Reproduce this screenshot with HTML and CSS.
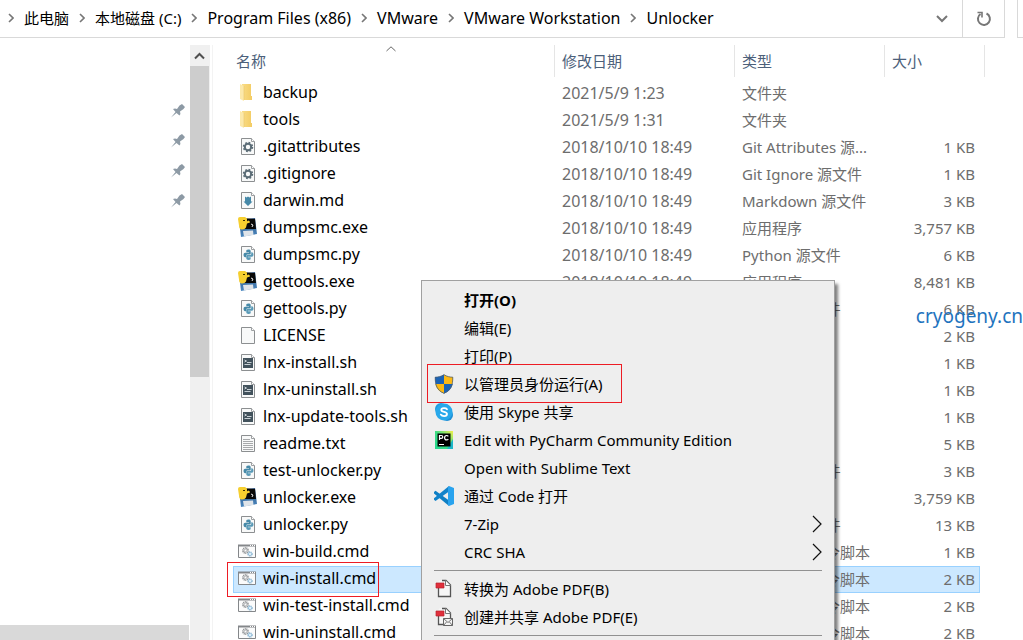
FILE: index.html
```
<!DOCTYPE html>
<html lang="zh-CN">
<head>
    <meta charset="UTF-8">
    <meta name="viewport" content="width=device-width, initial-scale=1.0">
    <title>Unlocker</title>
    <link rel="stylesheet" href="styles.css">
</head>
<body>
    <!-- icon definitions -->
    <svg class="defs" aria-hidden="true">
        <linearGradient id="gold" x1="0" x2="1" y1="0" y2="0">
            <stop offset="0" stop-color="#f9dc86"/>
            <stop offset="1" stop-color="#f3cc64"/>
        </linearGradient>
        <linearGradient id="floppy" x1="0" x2="0" y1="0" y2="1">
            <stop offset="0" stop-color="#2c5585"/>
            <stop offset="1" stop-color="#4b88c0"/>
        </linearGradient>
        <linearGradient id="charm" x1="0" x2="1" y1="1" y2="0">
            <stop offset="0" stop-color="#22d88f"/>
            <stop offset=".5" stop-color="#3fdc83"/>
            <stop offset="1" stop-color="#f5f04a"/>
        </linearGradient>
        <symbol id="folder" viewBox="0 0 20 20">
            <path d="M4 2h9v12h1v4H4z" fill="url(#gold)"/>
            <path d="M2 2l4 2v15l-4-2z" fill="#fce9ab"/>
            <path d="M6 4v14" stroke="#e9c66a" stroke-width=".6"/>
        </symbol>
        <symbol id="page" viewBox="0 0 20 20">
            <path d="M3.500 2.500h10l3 3v13h-13z" fill="#f8f9f9" stroke="#8c8f91"/>
            <path d="M13.500 2.500v3h3" fill="#fff" stroke="#9da0a2"/>
        </symbol>
        <symbol id="gear" viewBox="0 0 20 20">
            <use href="#page"/>
            <circle cx="10" cy="11" r="3.200" fill="none" stroke="#5b6c76" stroke-width="2"/>
            <circle cx="10" cy="11" r="4.500" fill="none" stroke="#5b6c76" stroke-width="1.500" stroke-dasharray="1.770 1.770"/>
        </symbol>
        <symbol id="md" viewBox="0 0 20 20">
            <use href="#page"/>
            <path d="M7 6.500l1.500 1 1.500-1 1.500 1 1.500-1v5h1.500L10 16l-4.500-4.500H7z" fill="#4689a8"/>
        </symbol>
        <symbol id="snake" viewBox="0 0 20 20">
            <path d="M10 1C6 1 6 2.500 6 4v2h5v1H4C1.500 7 1 9 1 11s1 4 3 4h2v-3c0-1.500 1-2 2.500-2H12c1.500 0 2-1 2-2V4c0-2-1.500-3-4-3z" fill="#4689a8"/>
            <path d="M10 20c4 0 4-1.500 4-3v-2H9v-1h7c2.500 0 3-2 3-4s-1-4-3-4h-1v3c0 1.500-1 2-2.500 2H8c-1.500 0-2 1-2 2v4c0 2 1.500 3 4 3z" fill="#5a9ab7"/>
        </symbol>
        <symbol id="py" viewBox="0 0 20 20">
            <use href="#page"/>
            <use href="#snake" x="5" y="5" width="11" height="11"/>
        </symbol>
        <symbol id="sh" viewBox="0 0 20 20">
            <use href="#page"/>
            <path d="M5 6h10v10H5z" fill="#42525c"/>
            <path d="M6.500 8l2 1-2 1M9 10.500h4.500M6.500 12.500h6" fill="none" stroke="#d8dfe3" stroke-width=".9"/>
        </symbol>
        <symbol id="txt" viewBox="0 0 20 20">
            <use href="#page"/>
            <path d="M5 6.500h7M5 8.500h10M5 10.500h10M5 12.500h10M5 14.500h10M5 16.500h10" stroke="#a7a9ab"/>
        </symbol>
        <symbol id="exe" viewBox="0 0 20 20">
            <path d="M1 3l16-2 2 16-16 3z" fill="url(#floppy)"/>
            <path d="M4 1l13 1 1 10H4z" fill="#080808"/>
            <path d="M0 2q0-2 2-2h5l2 1.500v3l1-1q2 0 2 2l-3 1-1 4q-1 2-4 2-3 0-3-4z" fill="#f6cf2f"/>
            <path d="M5 14l10-.5.500 4.500L6 19.500z" fill="#dfe4e9"/>
            <path d="M13 7l2 1-1 2" fill="none" stroke="#eee"/>
            <path d="M5 3.500h2" stroke="#3a3000"/>
        </symbol>
        <symbol id="cmd" viewBox="0 0 20 20">
            <path d="M.5 4.500h17v12H.5z" fill="#fbfbfb" stroke="#84878a"/>
            <path d="M0 4.500h18" stroke="#84878a" stroke-width="2"/>
            <path d="M12 4.500h1M14 4.500h1M16 4.500h1" stroke="#fff"/>
            <circle cx="7.500" cy="9.500" r="2.600" fill="none" stroke="#8b8e91" stroke-width="1.600" stroke-dasharray="1 .6"/>
            <circle cx="7.500" cy="9.500" r="1.300" fill="none" stroke="#9b9ea1" stroke-width=".7"/>
            <circle cx="12" cy="13" r="2" fill="#dceefa" stroke="#77a9ca" stroke-width="1.300" stroke-dasharray="1 .5"/>
        </symbol>
        <symbol id="pin" viewBox="0 0 16 16">
            <path d="M9.500 2.500L12 1l3 3-1.500 2-3.500 2.500q1 2.500-.5 4L6.500 10 1 14.500 5.500 9 3 6q2-1 4 0z" fill="#8d9aa5"/>
        </symbol>
        <symbol id="next" viewBox="0 0 6 10">
            <path d="M1 1l4 4-4 4" fill="none" stroke="#777" stroke-width="1.600"/>
        </symbol>
        <symbol id="sub" viewBox="0 0 10 18">
            <path d="M1 1l8 8-8 8" fill="none" stroke="#111" stroke-width="1.200"/>
        </symbol>
        <symbol id="pdf" viewBox="0 0 20 20">
            <path d="M5 1.500h7l4.500 4.500v11.500H4V5" fill="#f6f6f6"/>
            <path d="M8 1.500h4l4.500 4.500v11.500H4.500V9" fill="none" stroke="#555" stroke-width="1.300"/>
            <path d="M11.500 1.500v5h5" fill="#fff" stroke="#777"/>
            <path d="M2 4h8v5H2z" fill="#e0303c" stroke="#b8202c" stroke-width=".7"/>
        </symbol>
    </svg>

    <header class="topbar">
        <nav class="address" aria-label="路径">
            <svg class="next"><use href="#next"/></svg>
            <a href="#">此电脑</a>
            <svg class="next"><use href="#next"/></svg>
            <a href="#">本地磁盘 (C:)</a>
            <svg class="next"><use href="#next"/></svg>
            <a class="latin" href="#">Program Files (x86)</a>
            <svg class="next"><use href="#next"/></svg>
            <a class="latin" href="#">VMware</a>
            <svg class="next"><use href="#next"/></svg>
            <a class="latin" href="#">VMware Workstation</a>
            <svg class="next"><use href="#next"/></svg>
            <a class="latin" href="#">Unlocker</a>
            <button class="history" aria-label="以前的位置">
                <svg width="12" height="8" viewBox="0 0 12 8"><path d="M1 1l5 5 5-5" fill="none" stroke="#777" stroke-width="2"/></svg>
            </button>
            <button class="refresh" aria-label="刷新">
                <svg width="16" height="16" viewBox="0 0 16 16">
                    <path d="M10.500 2.500a6 6 0 1 1-6 .5" fill="none" stroke="#777" stroke-width="2"/>
                    <path d="M1.500 1.500H6v5" fill="none" stroke="#777" stroke-width="1.600"/>
                </svg>
            </button>
        </nav>
        <div class="search"></div>
    </header>

    <div class="content">
        <aside class="sidebar">
            <div class="tree">
                <svg class="pin"><use href="#pin"/></svg>
                <svg class="pin"><use href="#pin"/></svg>
                <svg class="pin"><use href="#pin"/></svg>
                <svg class="pin"><use href="#pin"/></svg>
                <div class="hscroll"></div>
            </div>
            <div class="vscroll">
                <button class="up" aria-label="向上滚动">
                    <svg width="11" height="8" viewBox="0 0 11 8"><path d="M1 6.500l4.500-4.500L10 6.500" fill="none" stroke="#505050" stroke-width="2"/></svg>
                </button>
                <div class="thumb"></div>
            </div>
        </aside>

        <main class="files">
            <table>
                <colgroup><col class="c-name"><col class="c-date"><col class="c-type"><col class="c-size"></colgroup>
                <thead>
                    <tr>
                        <th>名称<svg class="sort" width="10" height="6" viewBox="0 0 10 6"><path d="M.5 5L5 .8 9.500 5" fill="none" stroke="#666"/></svg></th>
                        <th>修改日期</th><th>类型</th><th>大小</th>
                    </tr>
                </thead>
                <tbody>
                    <tr><td><svg class="icon"><use href="#folder"/></svg>backup</td><td>2021/5/9 1:23</td><td>文件夹</td><td></td></tr>
                    <tr><td><svg class="icon"><use href="#folder"/></svg>tools</td><td>2021/5/9 1:31</td><td>文件夹</td><td></td></tr>
                    <tr><td><svg class="icon"><use href="#gear"/></svg>.gitattributes</td><td>2018/10/10 18:49</td><td>Git Attributes 源...</td><td>1 KB</td></tr>
                    <tr><td><svg class="icon"><use href="#gear"/></svg>.gitignore</td><td>2018/10/10 18:49</td><td>Git Ignore 源文件</td><td>1 KB</td></tr>
                    <tr><td><svg class="icon"><use href="#md"/></svg>darwin.md</td><td>2018/10/10 18:49</td><td>Markdown 源文件</td><td>3 KB</td></tr>
                    <tr><td><svg class="icon"><use href="#exe"/></svg>dumpsmc.exe</td><td>2018/10/10 18:49</td><td>应用程序</td><td>3,757 KB</td></tr>
                    <tr><td><svg class="icon"><use href="#py"/></svg>dumpsmc.py</td><td>2018/10/10 18:49</td><td>Python 源文件</td><td>6 KB</td></tr>
                    <tr><td><svg class="icon"><use href="#exe"/></svg>gettools.exe</td><td>2018/10/10 18:49</td><td>应用程序</td><td>8,481 KB</td></tr>
                    <tr><td><svg class="icon"><use href="#py"/></svg>gettools.py</td><td>2018/10/10 18:49</td><td>Python 源文件</td><td>6 KB</td></tr>
                    <tr><td><svg class="icon"><use href="#page"/></svg>LICENSE</td><td>2018/10/10 18:49</td><td>文件</td><td>2 KB</td></tr>
                    <tr><td><svg class="icon"><use href="#sh"/></svg>lnx-install.sh</td><td>2018/10/10 18:49</td><td>SH 文件</td><td>1 KB</td></tr>
                    <tr><td><svg class="icon"><use href="#sh"/></svg>lnx-uninstall.sh</td><td>2018/10/10 18:49</td><td>SH 文件</td><td>1 KB</td></tr>
                    <tr><td><svg class="icon"><use href="#sh"/></svg>lnx-update-tools.sh</td><td>2018/10/10 18:49</td><td>SH 文件</td><td>1 KB</td></tr>
                    <tr><td><svg class="icon"><use href="#txt"/></svg>readme.txt</td><td>2018/10/10 18:49</td><td>文本文档</td><td>5 KB</td></tr>
                    <tr><td><svg class="icon"><use href="#py"/></svg>test-unlocker.py</td><td>2018/10/10 18:49</td><td>Python 源文件</td><td>3 KB</td></tr>
                    <tr><td><svg class="icon"><use href="#exe"/></svg>unlocker.exe</td><td>2018/10/10 18:49</td><td>应用程序</td><td>3,759 KB</td></tr>
                    <tr><td><svg class="icon"><use href="#py"/></svg>unlocker.py</td><td>2018/10/10 18:49</td><td>Python 源文件</td><td>13 KB</td></tr>
                    <tr><td><svg class="icon"><use href="#cmd"/></svg>win-build.cmd</td><td>2018/10/10 18:49</td><td>Windows 命令脚本</td><td>1 KB</td></tr>
                    <tr class="selected"><td><svg class="icon"><use href="#cmd"/></svg>win-install.cmd<span class="mark mark-file"></span></td><td>2018/10/10 18:49</td><td>Windows 命令脚本</td><td>2 KB</td></tr>
                    <tr><td><svg class="icon"><use href="#cmd"/></svg>win-test-install.cmd</td><td>2018/10/10 18:49</td><td>Windows 命令脚本</td><td>2 KB</td></tr>
                    <tr><td><svg class="icon"><use href="#cmd"/></svg>win-uninstall.cmd</td><td>2018/10/10 18:49</td><td>Windows 命令脚本</td><td>2 KB</td></tr>
                </tbody>
            </table>
        </main>
    </div>

    <!-- right click menu -->
    <div class="menu">
        <button class="item default"><span class="icon"></span>打开(O)</button>
        <button class="item"><span class="icon"></span>编辑(E)</button>
        <button class="item"><span class="icon"></span>打印(P)</button>
        <button class="item">
            <svg class="icon" viewBox="0 0 20 20">
                <path d="M10 .5C7 2.500 4 3 1 3c0 8 2 13.500 9 16.500z" fill="#1b63b5"/>
                <path d="M10 .5c3 2 6 2.500 9 2.500 0 8-2 13.500-9 16.500z" fill="#fdb913"/>
                <path d="M1.200 10H10v9.500Q3 17 1.200 10z" fill="#fdb913"/>
                <path d="M18.800 10H10v9.500Q17 17 18.800 10z" fill="#1b63b5"/>
                <path d="M10 .7C7 2.600 4 3.200 1.200 3.200c0 8 1.800 13.200 8.800 16.100 7-2.900 8.800-8.100 8.800-16.100C16 3.200 13 2.600 10 .7z" fill="none" stroke="#4b5f73" stroke-width=".8"/>
            </svg>以管理员身份运行(A)<span class="mark mark-run"></span>
        </button>
        <button class="item">
            <svg class="icon" viewBox="0 0 20 20">
                <circle cx="7" cy="7" r="6" fill="#1e9be0"/><circle cx="13" cy="13" r="6" fill="#1e8ed6"/>
                <circle cx="10" cy="10" r="8.500" fill="#28a8ea"/>
                <path d="M13 7.200C12 5.800 7.300 5.500 7.300 8c0 2.500 5.700 1.300 5.700 4 0 2.800-5 2.500-6.200.6" fill="none" stroke="#fff" stroke-width="1.800" stroke-linecap="round"/>
            </svg>使用 Skype 共享
        </button>
        <button class="item">
            <svg class="icon" viewBox="0 0 20 20">
                <path d="M1 1h18v18H1z" fill="url(#charm)"/>
                <path d="M13 19l6-10v10z" fill="#1cb7c8"/>
                <path d="M3.500 3.500h13v13h-13z" fill="#000"/>
                <path d="M5.500 10V5.500h1.800q1.500 0 1.500 1.400T7.300 8.300H5.500M14.300 6.300q-.6-.8-1.700-.8-2 0-2 2.200t2 2.200q1.100 0 1.700-.8M5 14.500h5" fill="none" stroke="#fff" stroke-width="1.200"/>
            </svg>Edit with PyCharm Community Edition
        </button>
        <button class="item"><span class="icon"></span>Open with Sublime Text</button>
        <button class="item">
            <svg class="icon" viewBox="0 0 20 20">
                <path d="M0 6l1.500-1.200L15 14.500V20L0 7.500z" fill="#0f7fc4"/>
                <path d="M0 13.800l1.500 1.200L15 5.500V0L0 12.300z" fill="#1283ca"/>
                <path d="M15 0l5 2v16l-5 2-1-1.500V1.500z" fill="#29a3ee"/>
            </svg>通过 Code 打开
        </button>
        <button class="item"><span class="icon"></span>7-Zip<svg class="sub"><use href="#sub"/></svg></button>
        <button class="item"><span class="icon"></span>CRC SHA<svg class="sub"><use href="#sub"/></svg></button>
        <hr>
        <button class="item"><svg class="icon"><use href="#pdf"/></svg>转换为 Adobe PDF(B)</button>
        <button class="item">
            <svg class="icon" viewBox="0 0 20 20">
                <use href="#pdf"/>
                <path d="M9.500 11.500h9v7h-9z" fill="#f4f4f4" stroke="#666"/>
                <path d="M9.500 11.500l4.500 4 4.500-4M9.500 18.500l3-3.500M18.500 18.500l-3-3.500" fill="none" stroke="#666" stroke-width=".9"/>
            </svg>创建并共享 Adobe PDF(E)
        </button>
        <hr>
    </div>

    <div class="watermark">cryogeny.cn</div>
</body>
</html>
```

FILE: styles.css
```
* {
    box-sizing: border-box;
}
body {
    margin: 0;
    height: 100vh;
    overflow: hidden;
    position: relative;
    display: flex;
    flex-direction: column;
    background: #fff;
    color: #000;
    font: 15px/20px "Noto Sans", "Noto Sans CJK SC", sans-serif;
}
button {
    padding: 0;
    border: 0;
    background: none;
    color: inherit;
    font: inherit;
}
svg {
    flex: none;
}
.defs {
    position: absolute;
    width: 0;
    height: 0;
}

/* address bar */
.topbar {
    flex: none;
    display: flex;
    gap: 12px;
    height: 38px;
}
.address {
    flex: 1;
    display: flex;
    align-items: center;
    border: 1px solid #d9d9d9;
    border-width: 0 1px 1px 0;
    white-space: nowrap;
}
.address a {
    padding-bottom: 2px;
    color: inherit;
    text-decoration: none;
}
.address .latin {
    font-size: 16px;
}
.next {
    width: 6px;
    height: 10px;
    margin: 0 10px 2px;
}
.next:first-child {
    margin-left: 8px;
}
.history {
    margin-left: auto;
    width: 40px;
    height: 100%;
}
.refresh {
    width: 42px;
    height: 100%;
    border-left: 1px solid #d9d9d9;
}
.history svg, .refresh svg {
    display: block;
    margin: auto;
}
.search {
    width: 6px;
    border: 1px solid #d9d9d9;
    border-width: 0 0 1px 1px;
}

.content {
    flex: 1;
    min-height: 0;
    display: flex;
    padding-top: 7px;
}

/* left pane */
.sidebar {
    flex: none;
    display: flex;
    width: 213px;
    border-right: 1px solid #f3f3f3;
}
.tree {
    width: 190px;
    display: flex;
    flex-direction: column;
    align-items: flex-end;
    gap: 14px;
    padding-top: 58px;
}
.pin {
    width: 16px;
    height: 16px;
    margin-right: 4px;
}
.hscroll {
    align-self: stretch;
    height: 15px;
    margin: auto 1px 0 0;
    background: #d9d9d9;
}
.vscroll {
    width: 20px;
    background: #f0f0f0;
}
.up {
    display: block;
    width: 19px;
    height: 21px;
}
.up svg {
    display: block;
    margin: auto;
}
.thumb {
    width: 19px;
    height: 311px;
    background: #cdcdcd;
}

/* file list */
.files {
    flex: 1;
    min-width: 0;
    overflow: hidden;
    padding-left: 20px;
}
table {
    width: 752px;
    table-layout: fixed;
    border-collapse: separate;
    border-spacing: 0;
    white-space: nowrap;
}
.c-name { width: 322px; }
.c-date { width: 180px; }
.c-type { width: 150px; }
.c-size { width: 100px; }
th {
    position: relative;
    height: 32px;
    padding: 0 7px;
    border-right: 1px solid #e5e5e5;
    color: #4c607a;
    font-weight: normal;
    text-align: left;
}
th:first-child {
    padding-left: 3px;
}
.sort {
    position: absolute;
    top: 1px;
    left: 153px;
}
tbody::before {
    content: "";
    display: table-row;
    height: 3px;
}
td {
    height: 27px;
    padding: 0 7px 2px;
    color: #6d6d6d;
}
td:nth-child(-n+2) {
    font-size: 16px;
}
td:first-child {
    position: relative;
    padding: 0 0 0 5px;
    color: #000;
}
td:last-child {
    padding-right: 5px;
    border-right: 5px solid transparent;
    background-clip: padding-box;
    text-align: right;
}
.icon {
    width: 20px;
    height: 20px;
}
td .icon {
    margin: 0 5px 4px 0;
    vertical-align: middle;
}
.selected td {
    background-color: #cce8ff;
    box-shadow: inset 0 1px #99d1ff, inset 0 -1px #99d1ff;
}
.selected td:first-child {
    box-shadow: inset 0 1px #99d1ff, inset 0 -1px #99d1ff, inset 1px 0 #99d1ff;
}
.selected td:last-child {
    box-shadow: inset 0 1px #99d1ff, inset 0 -1px #99d1ff, inset -1px 0 #99d1ff;
}

/* context menu */
.menu {
    position: absolute;
    top: 280px;
    left: 421px;
    width: 414px;
    padding: 5px 12px;
    background: #eee;
    border: 1px solid #a0a0a0;
    box-shadow: 3px 4px 3px rgba(0, 0, 0, 0.5);
}
.item {
    position: relative;
    display: flex;
    align-items: center;
    gap: 10px;
    width: 100%;
    height: 28px;
    white-space: nowrap;
}
.default {
    font-weight: bold;
}
.sub {
    width: 10px;
    height: 18px;
    margin-left: auto;
}
.menu hr {
    height: 1px;
    margin: 4px 0;
    border: 0;
    background: #919191;
}

/* red frames */
.mark {
    position: absolute;
    border: 1px solid #ed1c24;
    z-index: 1;
}
.mark-file {
    top: -4px;
    left: -6px;
    width: 152px;
    height: 35px;
}
.mark-run {
    top: -6px;
    left: -7px;
    width: 195px;
    height: 39px;
}

.watermark {
    position: absolute;
    top: 302px;
    right: 0;
    color: #1e73be;
    font-size: 19px;
    line-height: 28px;
}
```
